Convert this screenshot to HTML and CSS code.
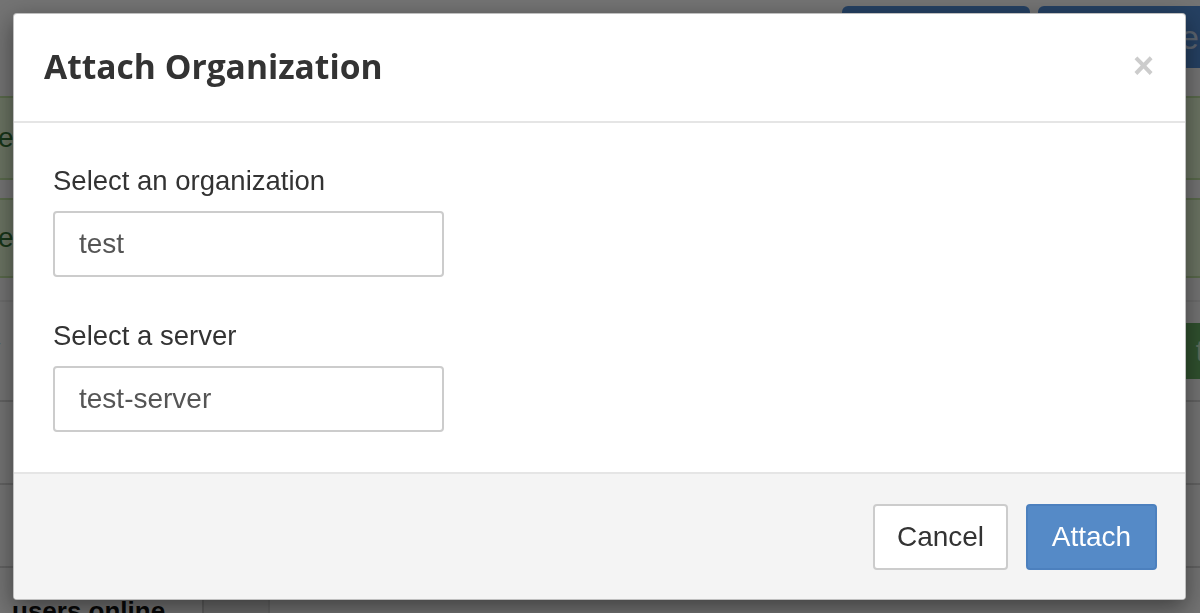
FILE: index.html
```html
<!DOCTYPE html>
<html>
<head>
<meta charset="utf-8">
<link rel="stylesheet" href="styles.css">
</head>
<body>
<div class="page">
  <div class="toolbar">
    <span class="tb-btn">Attach</span>
    <span class="tb-btn tb-btn-2">e</span>
  </div>
  <div class="alert"><span class="alert-text">e</span></div>
  <div class="alert alert-2"><span class="alert-text">e.</span></div>
  <div class="heading-row">
    <span class="heading">v</span>
    <span class="green-btn">t</span>
  </div>
  <div class="table">
    <div class="trow"></div>
    <div class="trow"></div>
    <div class="trow trow-last">
      <span class="cell cell-a">users online</span>
      <span class="cell cell-b"></span>
      <span class="cell cell-c"></span>
    </div>
  </div>
</div>

<div class="backdrop"></div>

<div class="modal">
  <div class="modal-header">
    <h4 class="modal-title">Attach Organization</h4>
    <button class="close" type="button">&times;</button>
  </div>
  <div class="modal-body">
    <div class="form-group">
      <label class="label">Select an organization</label>
      <div class="input">test</div>
    </div>
    <div class="form-group">
      <label class="label">Select a server</label>
      <div class="input">test-server</div>
    </div>
  </div>
  <div class="modal-footer">
    <button class="btn btn-default" type="button">Cancel</button>
    <button class="btn btn-primary" type="button">Attach</button>
  </div>
</div>
</body>
</html>
```
FILE: styles.css
```css
html, body {
  margin: 0;
  padding: 0;
  height: 100%;
  overflow: hidden;
}
body {
  background: #e6e6e6;
  font-family: "Liberation Sans", Arial, sans-serif;
  color: #333;
}

/* ---- page behind the dialog ---- */
.page {
  height: 613px;
  overflow: hidden;
}
.toolbar {
  display: flex;
  justify-content: flex-end;
  gap: 8px;
  padding-top: 6px;
  margin-right: -40px;
}
.tb-btn {
  width: 188px;
  height: 62px;
  background: #4a80c4;
  border-radius: 6px;
  font-size: 34px;
  line-height: 62px;
  box-sizing: border-box;
  overflow: hidden;
  color: transparent;
}
.tb-btn-2 {
  width: 202px;
  color: #b8c8de;
  padding-left: 142px;
}
.alert {
  margin-top: 28px;
  height: 80px;
  background: #d4e6c4;
  border-top: 2px solid #b2d296;
  border-bottom: 2px solid #b2d296;
  display: flex;
  align-items: center;
  font-size: 28px;
  color: #2f6a30;
}
.alert-2 {
  margin-top: 18px;
  height: 76px;
}
.alert-text {
  margin-left: -2px;
}
.heading-row {
  margin-top: 22px;
  border-top: 2px solid #d8d8d8;
  height: 98px;
  display: flex;
  align-items: center;
  justify-content: space-between;
}
.heading {
  font-size: 40px;
  font-weight: 700;
  color: #111;
  margin-left: -22px;
}
.green-btn {
  width: 120px;
  height: 56px;
  background: #5fa05c;
  color: #b9d8b6;
  font-size: 30px;
  line-height: 56px;
  text-align: right;
  padding-right: 4px;
  box-sizing: border-box;
  margin-right: -8px;
  border-radius: 4px;
}
.trow {
  height: 81px;
  border-top: 2px solid #c4c4c4;
}
.trow-last {
  display: flex;
  height: 200px;
}
.cell {
  display: block;
  height: 200px;
}
.cell-a {
  width: 204px;
  padding: 28px 0 0 12px;
  font-size: 26px;
  font-weight: 700;
  color: #111;
  border-right: 2px solid #bbbbbb;
  box-sizing: border-box;
  white-space: nowrap;
}
.cell-b {
  width: 64px;
  background: #d6d6d6;
  border-right: 2px solid #c8c8c8;
}

/* ---- backdrop ---- */
.backdrop {
  position: fixed;
  inset: 0;
  background: rgba(0, 0, 0, 0.5);
}

/* ---- dialog ---- */
.modal {
  position: fixed;
  left: 13px;
  top: 13px;
  width: 1173px;
  background: #fff;
  border: 1px solid rgba(0, 0, 0, 0.25);
  border-radius: 4px;
  box-shadow: 0 8px 24px rgba(0, 0, 0, 0.45);
  overflow: hidden;
  box-sizing: border-box;
}
.modal-header {
  height: 109px;
  box-sizing: border-box;
  border-bottom: 2px solid #e5e5e5;
  display: flex;
  align-items: center;
  justify-content: space-between;
  padding: 0 31px 0 30px;
}
.modal-title {
  margin: 0;
  font-family: "Open Sans", "Liberation Sans", sans-serif;
  font-weight: 700;
  font-size: 33.6px;
  color: #333;
  margin-top: -4px;
}
.close {
  border: 0;
  background: none;
  padding: 0;
  margin: -4px 0 0 0;
  font-family: "Liberation Sans", Arial, sans-serif;
  font-size: 36px;
  font-weight: 700;
  line-height: 1;
  color: #cccccc;
}
.modal-body {
  padding: 41px 39px 40px 39px;
}
.form-group {
  margin-bottom: 42px;
}
.form-group:last-child {
  margin-bottom: 0;
}
.label {
  display: block;
  font-size: 27.5px;
  line-height: 34px;
  color: #333;
  margin-bottom: 13px;
}
.input {
  width: 391px;
  height: 66px;
  box-sizing: border-box;
  border: 2px solid #cccccc;
  border-radius: 4px;
  padding: 0 24px;
  font-size: 28px;
  line-height: 62px;
  color: #555;
}
.modal-footer {
  background: #f4f4f4;
  border-top: 2px solid #e5e5e5;
  padding: 30px 28px 29px 0;
  display: flex;
  justify-content: flex-end;
  gap: 18px;
}
.btn {
  height: 66px;
  box-sizing: border-box;
  border-radius: 4px;
  font-family: "Liberation Sans", Arial, sans-serif;
  font-size: 28px;
  padding: 0;
  cursor: pointer;
}
.btn-default {
  background: #fff;
  color: #333;
  border: 2px solid #cccccc;
  width: 135px;
}
.btn-primary {
  background: #558ac7;
  color: #fff;
  border: 2px solid #4c80be;
  width: 131px;
}
```
